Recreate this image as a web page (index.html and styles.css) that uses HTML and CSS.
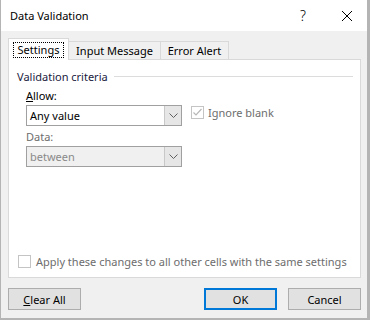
FILE: index.html
```html
<!DOCTYPE html>
<html lang="en">
<head>
    <meta charset="UTF-8">
    <title>Data Validation</title>
    <link rel="stylesheet" href="styles.css">
</head>
<body>
    <div class="dialog">
        <div class="titlebar">
            <span class="title">Data Validation</span>
            <span class="help">?</span>
            <span class="close">
                <svg width="12" height="12" viewBox="0 0 12 12"><path d="M1 1 L11 11 M11 1 L1 11" stroke="#000" stroke-width="1" fill="none"/></svg>
            </span>
        </div>
        <div class="main">
            <div class="tabs">
                <div class="tab active"><span class="focus">Settings</span></div>
                <div class="tab tab-input">Input Message</div>
                <div class="tab tab-error">Error Alert</div>
            </div>
            <div class="panel">
                <div class="group-head">
                    <span>Validation criteria</span>
                    <span class="rule"></span>
                </div>
                <div class="group">
                    <div class="label"><u>A</u>llow:</div>
                    <div class="row">
                        <div class="combo">
                            <span class="combo-text">Any value</span>
                            <span class="combo-btn"><svg width="9" height="6" viewBox="0 0 9 6"><path d="M0.5 0.5 L4.5 4.5 L8.5 0.5" stroke="#606060" fill="none"/></svg></span>
                        </div>
                        <div class="check-row">
                            <span class="checkbox">
                                <svg width="11" height="11" viewBox="0 0 11 11"><path d="M1.5 5.5 L4 8 L9.5 2" stroke="#b8b8b8" stroke-width="1.2" fill="none"/></svg>
                            </span>
                            <span class="muted">Ignore blank</span>
                        </div>
                    </div>
                    <div class="label muted data-label">Data:</div>
                    <div class="combo disabled">
                        <span class="combo-text">between</span>
                        <span class="combo-btn"><svg width="9" height="6" viewBox="0 0 9 6"><path d="M0.5 0.5 L4.5 4.5 L8.5 0.5" stroke="#606060" fill="none"/></svg></span>
                    </div>
                </div>
                <div class="apply">
                    <span class="checkbox"></span>
                    <span class="muted">Apply these changes to all other cells with the same settings</span>
                </div>
            </div>
            <div class="footer">
                <button class="btn"><u>C</u>lear All</button>
                <span class="spacer"></span>
                <button class="btn default">OK</button>
                <button class="btn">Cancel</button>
            </div>
        </div>
    </div>
</body>
</html>
```
FILE: styles.css
```css
body {
    margin: 0;
    font-family: "Noto Sans", Arial, sans-serif;
    font-size: 11px;
    color: #000;
}
.dialog {
    width: 370px;
    height: 320px;
    box-sizing: border-box;
    background-color: #f0f0f0;
    border-left: 1px solid #b4b4b4;
    border-right: 3px solid #b4b4b4;
    border-bottom: 2px solid #b4b4b4;
}
.titlebar {
    height: 31px;
    background-color: #fff;
    display: flex;
    align-items: center;
    padding-left: 9px;
}
.title {
    flex: 1;
}
.help {
    font-size: 14px;
    font-weight: 300;
    width: 41px;
}
.close {
    width: 26px;
    display: flex;
    align-items: center;
}
.main {
    padding: 7px 6px 0 7px;
}
.tabs {
    display: flex;
    align-items: flex-end;
    height: 21px;
}
.tab {
    box-sizing: border-box;
    height: 18px;
    border: 1px solid #d9d9d9;
    border-bottom: none;
    display: flex;
    align-items: center;
    justify-content: center;
    line-height: 16px;
}
.tab.active {
    width: 61px;
    height: 22px;
    margin-bottom: -1px;
    background-color: #fff;
    position: relative;
    z-index: 1;
}
.focus {
    border: 1px dotted #000;
    padding: 0 4px;
    line-height: 14px;
}
.tab-input {
    width: 93px;
    margin-left: -1px;
}
.tab-error {
    width: 69px;
    margin-left: -1px;
}
.panel {
    box-sizing: border-box;
    height: 219px;
    background-color: #fff;
    border: 1px solid #d9d9d9;
    padding: 8px 7px 8px 8px;
    display: flex;
    flex-direction: column;
}
.group-head {
    display: flex;
    align-items: center;
    height: 16px;
    color: #1a1a40;
}
.rule {
    flex: 1;
    height: 1px;
    background-color: #dcdcdc;
    margin-left: 6px;
}
.group {
    padding-left: 9px;
}
.label {
    margin-top: 4px;
    height: 16px;
    line-height: 16px;
}
.data-label {
    margin-top: 3px;
}
.muted {
    color: #6d6d6d;
}
.row {
    display: flex;
    align-items: flex-start;
}
.combo {
    margin-top: 1px;
    box-sizing: border-box;
    width: 156px;
    height: 21px;
    border: 1px solid #a0a0a0;
    display: flex;
    background-color: #fff;
}
.combo-text {
    flex: 1;
    padding-left: 3px;
    line-height: 19px;
}
.combo-btn {
    width: 16px;
    background-color: #e6e6e6;
    border-left: 1px solid #c8c8c8;
    display: flex;
    align-items: center;
    justify-content: center;
}
.combo.disabled {
    background-color: #f0f0f0;
    color: #8a8a8a;
}
.check-row {
    display: flex;
    align-items: center;
    margin-left: 9px;
    margin-top: 1px;
    gap: 4px;
}
.checkbox {
    box-sizing: border-box;
    width: 13px;
    height: 13px;
    border: 1px solid #c4c4c4;
    display: flex;
    align-items: center;
    justify-content: center;
    background-color: #fff;
}
.apply {
    margin-top: auto;
    display: flex;
    align-items: center;
    gap: 5px;
    height: 16px;
    padding-left: 1px;
    white-space: nowrap;
}
.footer {
    display: flex;
    margin-top: 10px;
}
.spacer {
    flex: 1;
}
.btn {
    box-sizing: border-box;
    width: 73px;
    height: 22px;
    margin: 0;
    padding: 0;
    font-family: "Noto Sans", Arial, sans-serif;
    font-size: 11px;
    color: #000;
    background-color: #e1e1e1;
    border: 1px solid #adadad;
}
.btn.default {
    border: 2px solid #0078d7;
    margin-right: 11px;
}
```
